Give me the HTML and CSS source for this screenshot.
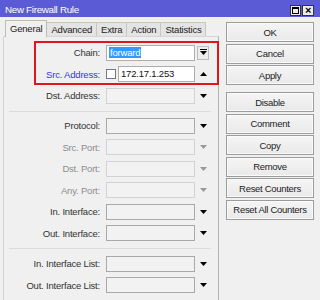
FILE: index.html
```html
<!DOCTYPE html>
<html lang="en">
<head>
  <meta charset="UTF-8">
  <title>New Firewall Rule</title>
  <link rel="stylesheet" href="styles.css">
</head>
<body>

  <div class="window">
    <div class="titlebar">
      <span class="title">New Firewall Rule</span>
      <div class="wbtns">
        <span class="wbtn"><span class="maxbox"></span></span>
        <span class="wbtn close">&times;</span>
      </div>
    </div>

    <div class="main">
      <div class="left">
        <div class="tabs">
          <span class="tab active">General</span>
          <span class="tab">Advanced</span>
          <span class="tab">Extra</span>
          <span class="tab">Action</span>
          <span class="tab">Statistics</span>
        </div>

        <div class="panel">
          <!-- general -->
          <div class="row">
            <label>Chain:</label>
            <div class="field white"><span class="sel">forward</span></div>
            <span class="ddbtn">
              <svg width="7" height="7" viewBox="0 0 7 7"><rect x="0" y="0" width="7" height="1" fill="#000"/><polygon points="0,2 7,2 3.5,6" fill="#000"/></svg>
            </span>
          </div>
          <div class="row">
            <label class="blue">Src. Address:</label>
            <div class="field-check">
              <span class="check"></span>
              <div class="field white">172.17.1.253</div>
            </div>
            <span class="arrow"><svg width="7" height="4" viewBox="0 0 7 4"><polygon points="0,4 7,4 3.5,0" fill="#000"/></svg></span>
          </div>
          <div class="row">
            <label>Dst. Address:</label>
            <div class="field off"></div>
            <span class="arrow"><svg width="7" height="4" viewBox="0 0 7 4"><polygon points="0,0 7,0 3.5,4" fill="#000"/></svg></span>
          </div>

          <div class="sep"></div>

          <div class="row">
            <label>Protocol:</label>
            <div class="field"></div>
            <span class="arrow"><svg width="7" height="4" viewBox="0 0 7 4"><polygon points="0,0 7,0 3.5,4" fill="#000"/></svg></span>
          </div>
          <div class="row">
            <label class="dim">Src. Port:</label>
            <div class="field off"></div>
            <span class="arrow"><svg width="7" height="4" viewBox="0 0 7 4"><polygon points="0,0 7,0 3.5,4" fill="#999"/></svg></span>
          </div>
          <div class="row">
            <label class="dim">Dst. Port:</label>
            <div class="field off"></div>
            <span class="arrow"><svg width="7" height="4" viewBox="0 0 7 4"><polygon points="0,0 7,0 3.5,4" fill="#999"/></svg></span>
          </div>
          <div class="row">
            <label class="dim">Any. Port:</label>
            <div class="field off"></div>
            <span class="arrow"><svg width="7" height="4" viewBox="0 0 7 4"><polygon points="0,0 7,0 3.5,4" fill="#999"/></svg></span>
          </div>
          <div class="row">
            <label>In. Interface:</label>
            <div class="field"></div>
            <span class="arrow"><svg width="7" height="4" viewBox="0 0 7 4"><polygon points="0,0 7,0 3.5,4" fill="#000"/></svg></span>
          </div>
          <div class="row">
            <label>Out. Interface:</label>
            <div class="field"></div>
            <span class="arrow"><svg width="7" height="4" viewBox="0 0 7 4"><polygon points="0,0 7,0 3.5,4" fill="#000"/></svg></span>
          </div>

          <div class="sep second"></div>

          <div class="row">
            <label>In. Interface List:</label>
            <div class="field"></div>
            <span class="arrow"><svg width="7" height="4" viewBox="0 0 7 4"><polygon points="0,0 7,0 3.5,4" fill="#000"/></svg></span>
          </div>
          <div class="row">
            <label>Out. Interface List:</label>
            <div class="field"></div>
            <span class="arrow"><svg width="7" height="4" viewBox="0 0 7 4"><polygon points="0,0 7,0 3.5,4" fill="#000"/></svg></span>
          </div>
        </div>
      </div>

      <div class="buttons">
        <button>OK</button>
        <button>Cancel</button>
        <button class="last">Apply</button>
        <button>Disable</button>
        <button>Comment</button>
        <button>Copy</button>
        <button>Remove</button>
        <button>Reset Counters</button>
        <button>Reset All Counters</button>
      </div>
    </div>

    <!-- red mark over chain / src address -->
    <div class="mark"></div>
  </div>

</body>
</html>
```

FILE: styles.css
```css
* {
  box-sizing: border-box;
}
body {
  margin: 0;
  background: #f0f0f0;
  font-family: "Liberation Sans", Arial, sans-serif;
  font-size: 9.5px;
  letter-spacing: -0.2px;
  color: #222;
}
.window {
  position: relative;
  width: 320px;
  height: 300px;
  overflow: hidden;
}

/* title bar */
.titlebar {
  height: 17px;
  background: #5b5bd6;
  display: flex;
  align-items: center;
  justify-content: space-between;
  padding: 0 6px 0 5px;
  color: #fff;
}
.title {
  font-size: 9.8px;
  letter-spacing: -0.3px;
  padding-top: 2px;
}
.wbtns {
  display: flex;
  gap: 1px;
  margin-top: 3px;
}
.wbtn {
  width: 11px;
  height: 11px;
  border: 1px solid #333;
  background: #ececec;
  color: #000;
  display: flex;
  align-items: center;
  justify-content: center;
  font-size: 11px;
  font-weight: bold;
  line-height: 1;
}
.wbtn.close {
  width: 12px;
}
.maxbox {
  width: 7px;
  height: 7px;
  border: 1px solid #000;
  border-top-width: 2px;
}

.main {
  display: flex;
}
.left {
  width: 219px;
}

/* tabs */
.tabs {
  display: flex;
  align-items: flex-end;
  height: 19px;
  padding-left: 5px;
}
.tab {
  height: 14px;
  line-height: 13px;
  padding: 0 4px;
  border: 1px solid #c6c6c6;
  border-bottom: none;
  background: #e4e4e4;
  color: #222;
  margin-right: -1px;
}
.tab.active {
  height: 17px;
  line-height: 15px;
  background: #f0f0f0;
  border-color: #bbb;
  position: relative;
  margin-bottom: -1px;
  z-index: 1;
}

/* panel */
.panel {
  margin-left: 3px;
  height: 290px;
  border: 1px solid #d5d5d5;
  border-right-color: #b4b4b4;
  padding-top: 5px;
}
.row {
  display: grid;
  grid-template-columns: 102px 89px 16px;
  align-items: center;
  height: 21.5px;
}
.row label {
  text-align: right;
  padding-right: 6px;
  color: #333;
  white-space: nowrap;
}
.row label.blue {
  color: #3535e8;
}
.row label.dim {
  color: #8c8c8c;
}
.field {
  height: 16px;
  border: 1px solid #a9a9a9;
  background: #f2f2f2;
  padding: 0 2px;
  line-height: 14px;
  color: #111;
}
.field.white {
  background: #fff;
  border-color: #adadad;
}
.field.off {
  border-color: #d2d2d2;
}
.sel {
  display: inline-block;
  background: #3399ff;
  color: #fff;
  line-height: 11px;
  padding: 0 1px;
}
.field-check {
  display: flex;
  align-items: center;
  gap: 2px;
}
.field-check .field {
  flex: 1;
}
.check {
  width: 10px;
  height: 10px;
  border: 1px solid #777;
  background: #fff;
}
.arrow {
  display: flex;
  justify-content: center;
  padding-left: 1px;
}
.ddbtn {
  width: 12px;
  height: 14px;
  margin-left: 2px;
  border: 1px solid #bcbcbc;
  background: #ececec;
  display: flex;
  align-items: center;
  justify-content: center;
}
.sep {
  height: 1px;
  background: #dcdcdc;
  margin: 4px 7px 3.5px 5px;
}
.sep.second {
  margin-top: 4px;
  margin-bottom: 4px;
}

/* buttons */
.buttons {
  margin-left: 7px;
  margin-top: 5px;
  width: 88px;
  display: flex;
  flex-direction: column;
  gap: 1.5px;
}
.buttons button {
  height: 20px;
  padding: 0;
  border: 1px solid #9c9c9c;
  background: linear-gradient(#f5f5f5, #e9e9e9);
  box-shadow: inset 0 0 0 1px #fafafa;
  font-family: inherit;
  font-size: 9.5px;
  letter-spacing: -0.3px;
  color: #222;
}
.buttons button.last {
  margin-bottom: 5.5px;
}

/* red mark */
.mark {
  position: absolute;
  left: 34px;
  top: 41px;
  width: 185px;
  height: 44px;
  border: 2px solid #e0161b;
}
```
